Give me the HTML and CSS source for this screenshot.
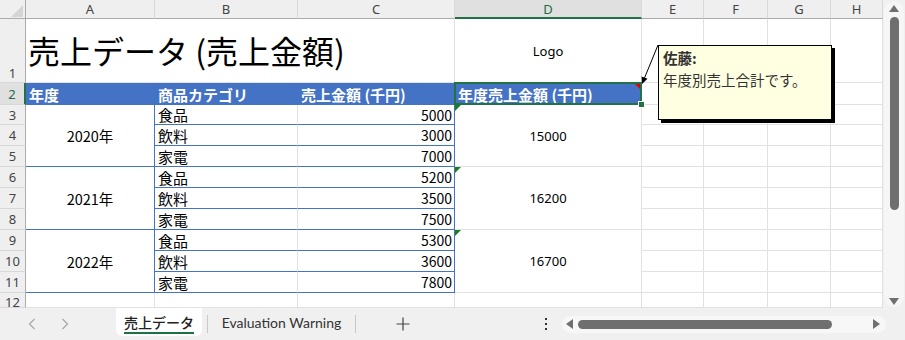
FILE: index.html
```html
<!DOCTYPE html>
<html lang="ja">
<head>
<meta charset="utf-8">
<link rel="stylesheet" href="styles.css">
</head>
<body>
<div class="app">
  <div class="main">
    <div class="sheet">
      <div class="corner"></div>
      <div class="ch">A</div>
      <div class="ch">B</div>
      <div class="ch">C</div>
      <div class="ch sel">D</div>
      <div class="ch">E</div>
      <div class="ch">F</div>
      <div class="ch">G</div>
      <div class="ch">H</div>

      <div class="rh r1">1</div>
      <div class="c title">売上データ (売上金額)</div>
      <div class="c logo">Logo</div>
      <div class="c"></div><div class="c"></div><div class="c"></div><div class="c"></div>

      <div class="rh sel">2</div>
      <div class="c hd">年度</div>
      <div class="c hd">商品カテゴリ</div>
      <div class="c hd">売上金額 (千円)</div>
      <div class="c hd act">年度売上金額 (千円)<span class="note"></span><span class="selbox"></span><span class="handle"></span></div>
      <div class="c"></div><div class="c"></div><div class="c"></div><div class="c"></div>

      <div class="rh">3</div>
      <div class="c yr">2020年</div>
      <div class="c cat">食品</div>
      <div class="c amt">5000</div>
      <div class="c tot"><span class="err"></span>15000</div>
      <div class="c"></div><div class="c"></div><div class="c"></div><div class="c"></div>

      <div class="rh">4</div>
      <div class="c cat">飲料</div>
      <div class="c amt">3000</div>
      <div class="c"></div><div class="c"></div><div class="c"></div><div class="c"></div>

      <div class="rh">5</div>
      <div class="c cat">家電</div>
      <div class="c amt">7000</div>
      <div class="c"></div><div class="c"></div><div class="c"></div><div class="c"></div>

      <div class="rh">6</div>
      <div class="c yr">2021年</div>
      <div class="c cat">食品</div>
      <div class="c amt">5200</div>
      <div class="c tot"><span class="err"></span>16200</div>
      <div class="c"></div><div class="c"></div><div class="c"></div><div class="c"></div>

      <div class="rh">7</div>
      <div class="c cat">飲料</div>
      <div class="c amt">3500</div>
      <div class="c"></div><div class="c"></div><div class="c"></div><div class="c"></div>

      <div class="rh">8</div>
      <div class="c cat">家電</div>
      <div class="c amt">7500</div>
      <div class="c"></div><div class="c"></div><div class="c"></div><div class="c"></div>

      <div class="rh">9</div>
      <div class="c yr">2022年</div>
      <div class="c cat">食品</div>
      <div class="c amt">5300</div>
      <div class="c tot"><span class="err"></span>16700</div>
      <div class="c"></div><div class="c"></div><div class="c"></div><div class="c"></div>

      <div class="rh">10</div>
      <div class="c cat">飲料</div>
      <div class="c amt">3600</div>
      <div class="c"></div><div class="c"></div><div class="c"></div><div class="c"></div>

      <div class="rh">11</div>
      <div class="c cat">家電</div>
      <div class="c amt">7800</div>
      <div class="c"></div><div class="c"></div><div class="c"></div><div class="c"></div>

      <div class="rh r12">12</div>
      <div class="c"></div><div class="c"></div><div class="c"></div><div class="c"></div>
      <div class="c"></div><div class="c"></div><div class="c"></div><div class="c"></div>
    </div>
    <div class="vscroll">
      <div class="vtrack">
        <svg class="varrow" width="10" height="7" viewBox="0 0 10 7"><polygon points="5,0 10,7 0,7" fill="#6f6f6f"/></svg>
        <div class="vthumb"></div>
        <div class="vspace"></div>
        <svg class="varrow" width="10" height="7" viewBox="0 0 10 7"><polygon points="0,0 10,0 5,7" fill="#6f6f6f"/></svg>
      </div>
    </div>
  </div>

  <div class="tabs">
    <div class="navs">
      <svg width="8" height="12" viewBox="0 0 8 12"><polyline points="6.5,1 1.5,6 6.5,11" fill="none" stroke="#a6a6a6" stroke-width="1.2"/></svg>
      <svg width="8" height="12" viewBox="0 0 8 12"><polyline points="1.5,1 6.5,6 1.5,11" fill="none" stroke="#a6a6a6" stroke-width="1.2"/></svg>
    </div>
    <div class="tab active"><span>売上データ</span></div>
    <div class="sep sep1"></div>
    <div class="tab">Evaluation Warning</div>
    <div class="sep"></div>
    <div class="plus">
      <svg width="14" height="14" viewBox="0 0 14 14"><path d="M7 0.5V13.5M0.5 7H13.5" stroke="#444" stroke-width="1.2"/></svg>
    </div>
    <div class="more">
      <svg width="4" height="14" viewBox="0 0 4 14"><rect x="1" y="1" width="2" height="2" fill="#333"/><rect x="1" y="6" width="2" height="2" fill="#333"/><rect x="1" y="11" width="2" height="2" fill="#333"/></svg>
    </div>
    <div class="hscroll">
      <svg width="7" height="10" viewBox="0 0 7 10"><polygon points="7,0 7,10 0,5" fill="#6f6f6f"/></svg>
      <div class="hthumb"></div>
      <div class="hspace"></div>
      <svg width="7" height="10" viewBox="0 0 7 10"><polygon points="0,0 7,5 0,10" fill="#6f6f6f"/></svg>
    </div>
  </div>

  <svg class="arrow" width="905" height="340" viewBox="0 0 905 340">
    <line x1="658" y1="45" x2="644.5" y2="78" stroke="#000" stroke-width="1"/>
    <polygon points="642,84 641.5,76.5 647.5,78.8" fill="#000"/>
  </svg>
  <div class="comment">
    <div class="author">佐藤:</div>
    <div>年度別売上合計です。</div>
  </div>
</div>
</body>
</html>
```

FILE: styles.css
```css
* { box-sizing: border-box; }

body {
  margin: 0;
  width: 905px;
  height: 340px;
  overflow: hidden;
  background: #f0f0f0;
  font-family: "Noto Sans CJK JP", sans-serif;
}

.app {
  position: relative;
  width: 905px;
  height: 340px;
}

.main {
  display: flex;
  height: 308px;
}

.sheet {
  display: grid;
  grid-template-columns: 26px 129px 143px 157px 187px 62px 64px 63px 52px;
  grid-template-rows: 19px 64px 22px 20px repeat(8, 21px) 15px;
  width: 883px;
  height: 308px;
  overflow: hidden;
  background: #fff;
}

.corner {
  background: #efefef;
  border-right: 1px solid #ababab;
  border-bottom: 1px solid #ababab;
  position: relative;
}
.corner::after {
  content: "";
  position: absolute;
  left: 11px;
  top: 5px;
  width: 12px;
  height: 12px;
  background: #d4d4d4;
  clip-path: polygon(100% 0, 100% 100%, 0 100%);
}

.ch {
  background: #efefef;
  border-right: 1px solid #d8d8d8;
  border-bottom: 1px solid #ababab;
  color: #444;
  font: 13px "Noto Sans", sans-serif;
  display: flex;
  align-items: center;
  justify-content: center;
}
.ch.sel {
  background: #e0e0e0;
  color: #1e6c41;
  border-bottom: 2px solid #217346;
}

.rh {
  background: #efefef;
  border-right: 1px solid #ababab;
  border-bottom: 1px solid #d8d8d8;
  color: #444;
  font: 13px "Noto Sans", sans-serif;
  display: flex;
  align-items: center;
  justify-content: center;
}
.rh.r1 {
  align-items: flex-end;
}
.rh.r12 {
  align-items: flex-start;
  line-height: 16px;
  padding-top: 1px;
}
.rh.sel {
  background: #e0e0e0;
  color: #1e6c41;
  border-right: 2px solid #217346;
}

.c {
  position: relative;
  border-right: 1px solid #e1e1e1;
  border-bottom: 1px solid #e1e1e1;
  display: flex;
  align-items: center;
  padding: 0 3px;
  font-size: 15px;
  color: #000;
  white-space: nowrap;
}

.title {
  grid-column: span 3;
  align-items: flex-end;
  font-size: 32px;
  line-height: 40px;
  padding-left: 2px;
  padding-bottom: 12px;
}

.logo {
  justify-content: center;
  font: 13px "Noto Sans", sans-serif;
}

.hd {
  background: #4472c4;
  color: #fff;
  font-weight: bold;
  border-right-color: #4472c4;
  border-bottom-color: #4472c4;
  padding-top: 1px;
}
.act { overflow: visible; }
.note {
  position: absolute;
  right: 1px;
  top: 1px;
  width: 5px;
  height: 5px;
  background: #e00000;
  clip-path: polygon(0 0, 100% 0, 100% 100%);
}
.selbox {
  position: absolute;
  left: -1px;
  top: -1px;
  right: -1px;
  bottom: -1px;
  border: 2px solid #217346;
  z-index: 2;
}
.handle {
  position: absolute;
  right: -4px;
  bottom: -4px;
  width: 7px;
  height: 7px;
  background: #217346;
  border: 1px solid #fff;
  z-index: 3;
}

.yr {
  grid-row: span 3;
  justify-content: center;
  border-right-color: #4472c4;
  border-bottom-color: #4472c4;
  font-size: 14.5px;
}
.cat {
  border-bottom-color: #4472c4;
}
.amt {
  justify-content: flex-end;
  border-right-color: #4472c4;
  border-bottom-color: #4472c4;
  font-size: 14px;
  padding-right: 2px;
}
.tot {
  grid-row: span 3;
  justify-content: center;
  font: 13px "Noto Sans", sans-serif;
}
.err {
  position: absolute;
  left: 0;
  top: 0;
  width: 6px;
  height: 6px;
  background: #1a7f1a;
  clip-path: polygon(0 0, 100% 0, 0 100%);
}

.vscroll {
  width: 22px;
  height: 308px;
  background: #f0f0f0;
  padding: 1px;
}
.vtrack {
  height: 100%;
  background: #f6f6f6;
  border-radius: 10px;
  display: flex;
  flex-direction: column;
  align-items: center;
  padding: 4px 0 2px;
}
.varrow { display: block; }
.vthumb {
  width: 9px;
  height: 193px;
  margin-top: 5px;
  background: #6f6f6f;
  border-radius: 5px;
}
.vspace { flex: 1; }

.tabs {
  display: flex;
  align-items: center;
  height: 32px;
}
.navs {
  width: 116px;
  display: flex;
  align-items: center;
  gap: 25px;
  padding-left: 28px;
}
.navs svg { display: block; }

.tab {
  height: 28px;
  display: flex;
  align-items: center;
  justify-content: center;
  font: 14px "Lato", sans-serif;
  color: #333;
  width: 147px;
  margin-bottom: 4px;
}
.tab.active {
  width: 86px;
  background: #fff;
  border-radius: 0 0 6px 6px;
  align-items: flex-start;
  padding-top: 5px;
}
.tab.active span {
  font: 500 14px "Noto Sans CJK JP", sans-serif;
  color: #222;
  line-height: 18px;
  border-bottom: 2px solid #1e7145;
  padding-bottom: 1px;
}

.sep {
  width: 1px;
  height: 18px;
  background: #c8c8c8;
}
.sep1 { margin-left: 5px; }

.plus {
  width: 94px;
  display: flex;
  justify-content: center;
}
.plus svg { display: block; }

.more {
  margin-left: 86px;
  width: 20px;
  display: flex;
  justify-content: center;
}
.more svg { display: block; }

.hscroll {
  margin-left: 6px;
  width: 324px;
  height: 17px;
  background: #f7f7f7;
  border-radius: 9px;
  display: flex;
  align-items: center;
  padding: 0 6px 0 4px;
}
.hscroll svg { display: block; }
.hthumb {
  width: 254px;
  height: 9px;
  margin-left: 5px;
  background: #6f6f6f;
  border-radius: 5px;
}
.hspace { flex: 1; }

.arrow {
  position: absolute;
  left: 0;
  top: 0;
  z-index: 5;
  pointer-events: none;
}

.comment {
  position: absolute;
  left: 658px;
  top: 45px;
  width: 174px;
  height: 75px;
  background: #ffffe1;
  border: 1px solid #000;
  box-shadow: 3px 3px 0 #000;
  padding: 1px 4px;
  font-size: 14.5px;
  line-height: 22px;
  color: #333;
  z-index: 6;
}
.author { font-weight: bold; }
```
